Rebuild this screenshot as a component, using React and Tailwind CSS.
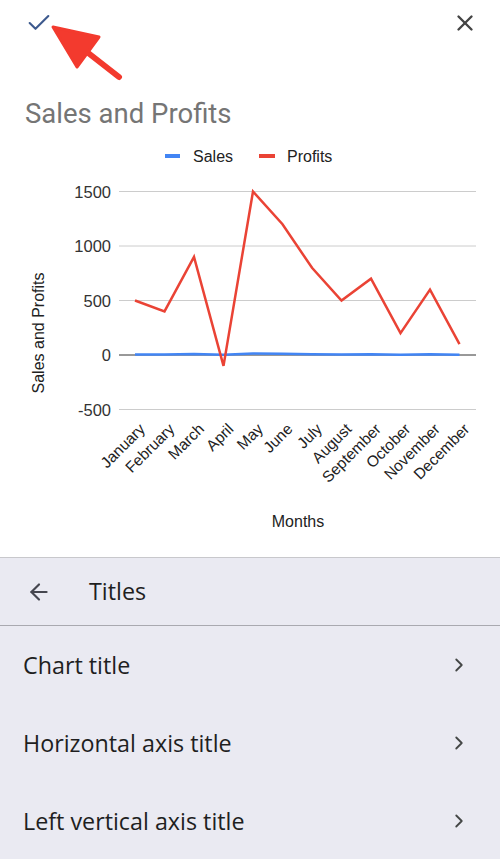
import { ArrowLeft, ChevronRight, X, Check } from 'lucide-react';

const months = ['January', 'February', 'March', 'April', 'May', 'June', 'July', 'August', 'September', 'October', 'November', 'December'];
const profits = [500, 400, 900, -100, 1500, 1200, 800, 500, 700, 200, 600, 100];
const sales = [4, 5, 10, 3, 14, 12, 8, 5, 8, 3, 6, 2];

// chart geometry in page coordinates
const X0 = 135;
const STEP = 29.5;
const ZERO = 355;
const PER = 54.5 / 500;

const px = i => X0 + i * STEP;
const py = v => ZERO - v * PER;

function Chart() {
  const ticks = [1500, 1000, 500, 0, -500];
  const toPts = arr => arr.map((v, i) => `${px(i)},${py(v)}`).join(' ');

  return (
    <svg width="500" height="422" viewBox="0 135 500 422" className="block" style={{ fontFamily: '"Liberation Sans", Arial, sans-serif' }}>
      {/* legend */}
      <rect x="165" y="154" width="15" height="4" fill="#4285f4" />
      <text x="193" y="162" fontSize="16" fill="#222">Sales</text>
      <rect x="259" y="154" width="16" height="4" fill="#ea4335" />
      <text x="287" y="162" fontSize="16" fill="#222">Profits</text>

      {/* grid */}
      {ticks.map(t => (
        <g key={t}>
          <line x1="119" x2="476" y1={py(t)} y2={py(t)} stroke={t === 0 ? '#333' : '#ccc'} strokeWidth="1" />
          <text x="111" y={py(t) + 6} fontSize="16.5" fill="#333" textAnchor="end">{t}</text>
        </g>
      ))}

      {/* series */}
      <polyline points={toPts(sales)} fill="none" stroke="#4285f4" strokeWidth="2.5" strokeLinejoin="round" />
      <polyline points={toPts(profits)} fill="none" stroke="#ea4335" strokeWidth="2.5" strokeLinejoin="miter" />

      {/* x labels */}
      {months.map((m, i) => (
        <text key={m} x={px(i) + 11} y={430} fontSize="15.5" fill="#222" textAnchor="end" transform={`rotate(-45 ${px(i) + 11} 430)`}>
          {m}
        </text>
      ))}

      <text x="298" y="527" fontSize="16" fill="#222" textAnchor="middle">Months</text>
      <text x="44" y="333" fontSize="16" fill="#222" textAnchor="middle" transform="rotate(-90 44 333)">Sales and Profits</text>
    </svg>
  );
}

function Row({ label }) {
  return (
    <div className="flex items-center justify-between h-[78px] pl-[23px] pr-[30px]">
      <span className="text-[23.3px] text-[#1f1f1f]" style={{ fontFamily: '"Open Sans", Roboto, sans-serif' }}>{label}</span>
      <ChevronRight size={22} strokeWidth={2} className="text-[#444746]" />
    </div>
  );
}

export default function App() {
  return (
    <div className="relative w-[500px] h-[859px] overflow-hidden bg-white" style={{ fontFamily: 'Roboto, "Open Sans", sans-serif' }}>
      {/* top bar */}
      <div className="flex items-center justify-between h-[67px] bg-white pl-[25px] pr-[22px] pb-[22px]">
        <Check size={28} strokeWidth={1.8} className="text-[#3d5a8e]" />
        <X size={26} strokeWidth={2.2} className="text-[#444]" />
      </div>

      {/* chart */}
      <div className="h-[68px] flex items-end pl-[25px] pb-[8px]">
        <h1 className="text-[27.5px] leading-none text-[#757575]">Sales and Profits</h1>
      </div>
      <Chart />

      {/* titles panel */}
      <div className="bg-[#eaeaf2] border-t border-[#c8c8cc] h-[302px]">
        <div className="flex items-center h-[68px] pl-[26px] gap-[37px] border-b border-[#a9a9b0]">
          <ArrowLeft size={26} strokeWidth={2} className="text-[#45464f]" />
          <span className="text-[23.3px] text-[#1f1f1f]" style={{ fontFamily: '"Open Sans", Roboto, sans-serif' }}>Titles</span>
        </div>
        <Row label="Chart title" />
        <Row label="Horizontal axis title" />
        <Row label="Left vertical axis title" />
      </div>

      {/* annotation arrow */}
      <svg className="absolute left-0 top-0 pointer-events-none" width="140" height="90">
        <line x1="119" y1="77" x2="78" y2="45" stroke="#f33a2e" strokeWidth="6" strokeLinecap="round" />
        <polygon points="53,27 99,37 77,67" fill="#f33a2e" stroke="#f33a2e" strokeWidth="3" strokeLinejoin="round" />
      </svg>
    </div>
  );
}
